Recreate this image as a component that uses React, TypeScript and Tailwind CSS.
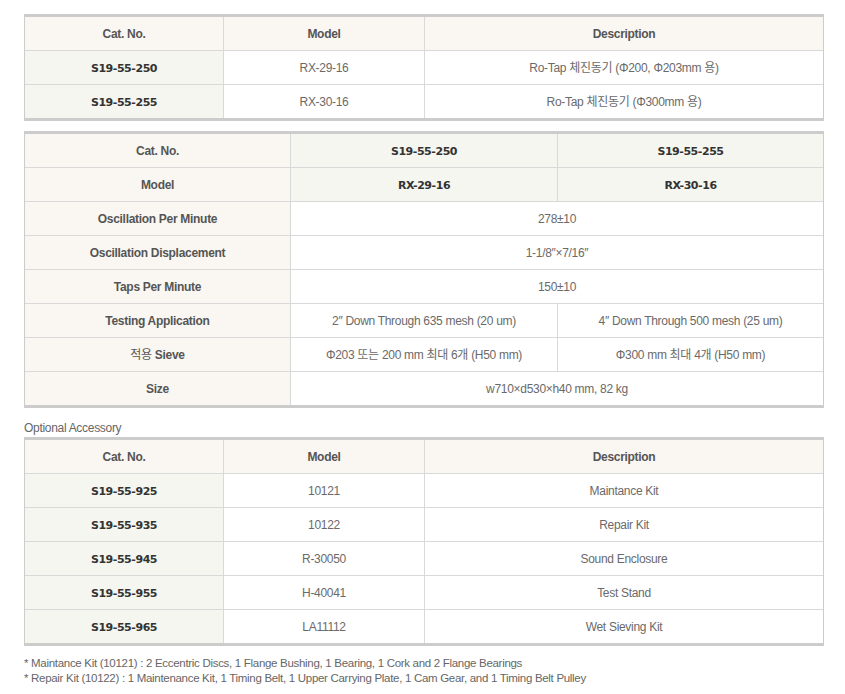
import React from 'react';

const FONT = { fontFamily: '"Liberation Sans", "Noto Sans CJK KR", sans-serif' };
const CAT_FONT = { fontFamily: '"DejaVu Sans", "Liberation Sans", sans-serif' };

const head = 'flex items-center justify-center border-[#d9d9d9] bg-[#faf7f2] text-[12px] font-bold tracking-[-0.3px] text-[#555]';
const cat = 'flex items-center justify-center border-[#d9d9d9] bg-[#f4f6ef] pt-[4px] text-[11px] font-bold tracking-[-0.45px] text-[#333]';
const cell = 'flex items-center justify-center border-[#d9d9d9] bg-white text-[12px] tracking-[-0.3px] text-[#6a6a6a]';

const PRODUCTS = [
  { cat: 'S19-55-250', model: 'RX-29-16', desc: 'Ro-Tap 체진동기 (Φ200, Φ203mm 용)' },
  { cat: 'S19-55-255', model: 'RX-30-16', desc: 'Ro-Tap 체진동기 (Φ300mm 용)' },
];

const ACCESSORIES = [
  { cat: 'S19-55-925', model: '10121', desc: 'Maintance Kit' },
  { cat: 'S19-55-935', model: '10122', desc: 'Repair Kit' },
  { cat: 'S19-55-945', model: 'R-30050', desc: 'Sound Enclosure' },
  { cat: 'S19-55-955', model: 'H-40041', desc: 'Test Stand' },
  { cat: 'S19-55-965', model: 'LA11112', desc: 'Wet Sieving Kit' },
];

// rows are 34px incl. bottom line; the last one has no line, so 33px
const rowCls = (last: boolean) => (last ? 'h-[33px]' : 'h-[34px] border-b');

function ThreeColTable({ rows }: { rows: { cat: string; model: string; desc: string }[] }) {
  return (
    <div className="w-[800px] border-x border-y-[3px] border-[#cccccc]">
      <div className="grid grid-cols-[199px_201px_1fr]">
        <div className={`${head} ${rowCls(false)} border-r`}>Cat. No.</div>
        <div className={`${head} ${rowCls(false)} border-r`}>Model</div>
        <div className={`${head} ${rowCls(false)}`}>Description</div>
        {rows.map((r, i) => {
          const rc = rowCls(i === rows.length - 1);
          return (
            <React.Fragment key={r.cat}>
              <div className={`${cat} ${rc} border-r`} style={CAT_FONT}>{r.cat}</div>
              <div className={`${cell} ${rc} border-r`}>{r.model}</div>
              <div className={`${cell} ${rc}`}>{r.desc}</div>
            </React.Fragment>
          );
        })}
      </div>
    </div>
  );
}

function SpecTable() {
  const r = rowCls(false);
  const l = rowCls(true);
  return (
    <div className="w-[800px] border-x border-y-[3px] border-[#cccccc]">
      <div className="grid grid-cols-[266px_267px_1fr]">
        <div className={`${head} ${r} border-r`}>Cat. No.</div>
        <div className={`${cat} ${r} border-r`} style={CAT_FONT}>S19-55-250</div>
        <div className={`${cat} ${r}`} style={CAT_FONT}>S19-55-255</div>

        <div className={`${head} ${r} border-r`}>Model</div>
        <div className={`${cat} ${r} border-r`} style={CAT_FONT}>RX-29-16</div>
        <div className={`${cat} ${r}`} style={CAT_FONT}>RX-30-16</div>

        <div className={`${head} ${r} border-r`}>Oscillation Per Minute</div>
        <div className={`${cell} ${r} col-span-2`}>278±10</div>

        <div className={`${head} ${r} border-r`}>Oscillation Displacement</div>
        <div className={`${cell} ${r} col-span-2`}>1-1/8″×7/16″</div>

        <div className={`${head} ${r} border-r`}>Taps Per Minute</div>
        <div className={`${cell} ${r} col-span-2`}>150±10</div>

        <div className={`${head} ${r} border-r`}>Testing Application</div>
        <div className={`${cell} ${r} border-r`}>2″ Down Through 635 mesh (20 um)</div>
        <div className={`${cell} ${r}`}>4″ Down Through 500 mesh (25 um)</div>

        <div className={`${head} ${r} border-r`}>
          <span className="font-normal">적용</span>&nbsp;Sieve
        </div>
        <div className={`${cell} ${r} border-r`}>Φ203 또는 200 mm 최대 6개 (H50 mm)</div>
        <div className={`${cell} ${r}`}>Φ300 mm 최대 4개 (H50 mm)</div>

        <div className={`${head} ${l} border-r`}>Size</div>
        <div className={`${cell} ${l} col-span-2`}>w710×d530×h40 mm, 82 kg</div>
      </div>
    </div>
  );
}

export default function App() {
  return (
    <div className="min-h-[694px] w-[845px] bg-white pt-[14px] pl-[24px]" style={FONT}>
      <ThreeColTable rows={PRODUCTS} />
      <div className="mt-[10px]">
        <SpecTable />
      </div>
      <div className="mt-[12px] h-[17px] text-[12px] leading-[17px] tracking-[-0.3px] text-[#666]">Optional Accessory</div>
      <ThreeColTable rows={ACCESSORIES} />
      <div className="mt-[10px] text-[11.5px] leading-[15px] tracking-[-0.3px] text-[#666]">
        <p>* Maintance Kit (10121) : 2 Eccentric Discs, 1 Flange Bushing, 1 Bearing, 1 Cork and 2 Flange Bearings</p>
        <p>* Repair Kit (10122) : 1 Maintenance Kit, 1 Timing Belt, 1 Upper Carrying Plate, 1 Cam Gear, and 1 Timing Belt Pulley</p>
      </div>
    </div>
  );
}
